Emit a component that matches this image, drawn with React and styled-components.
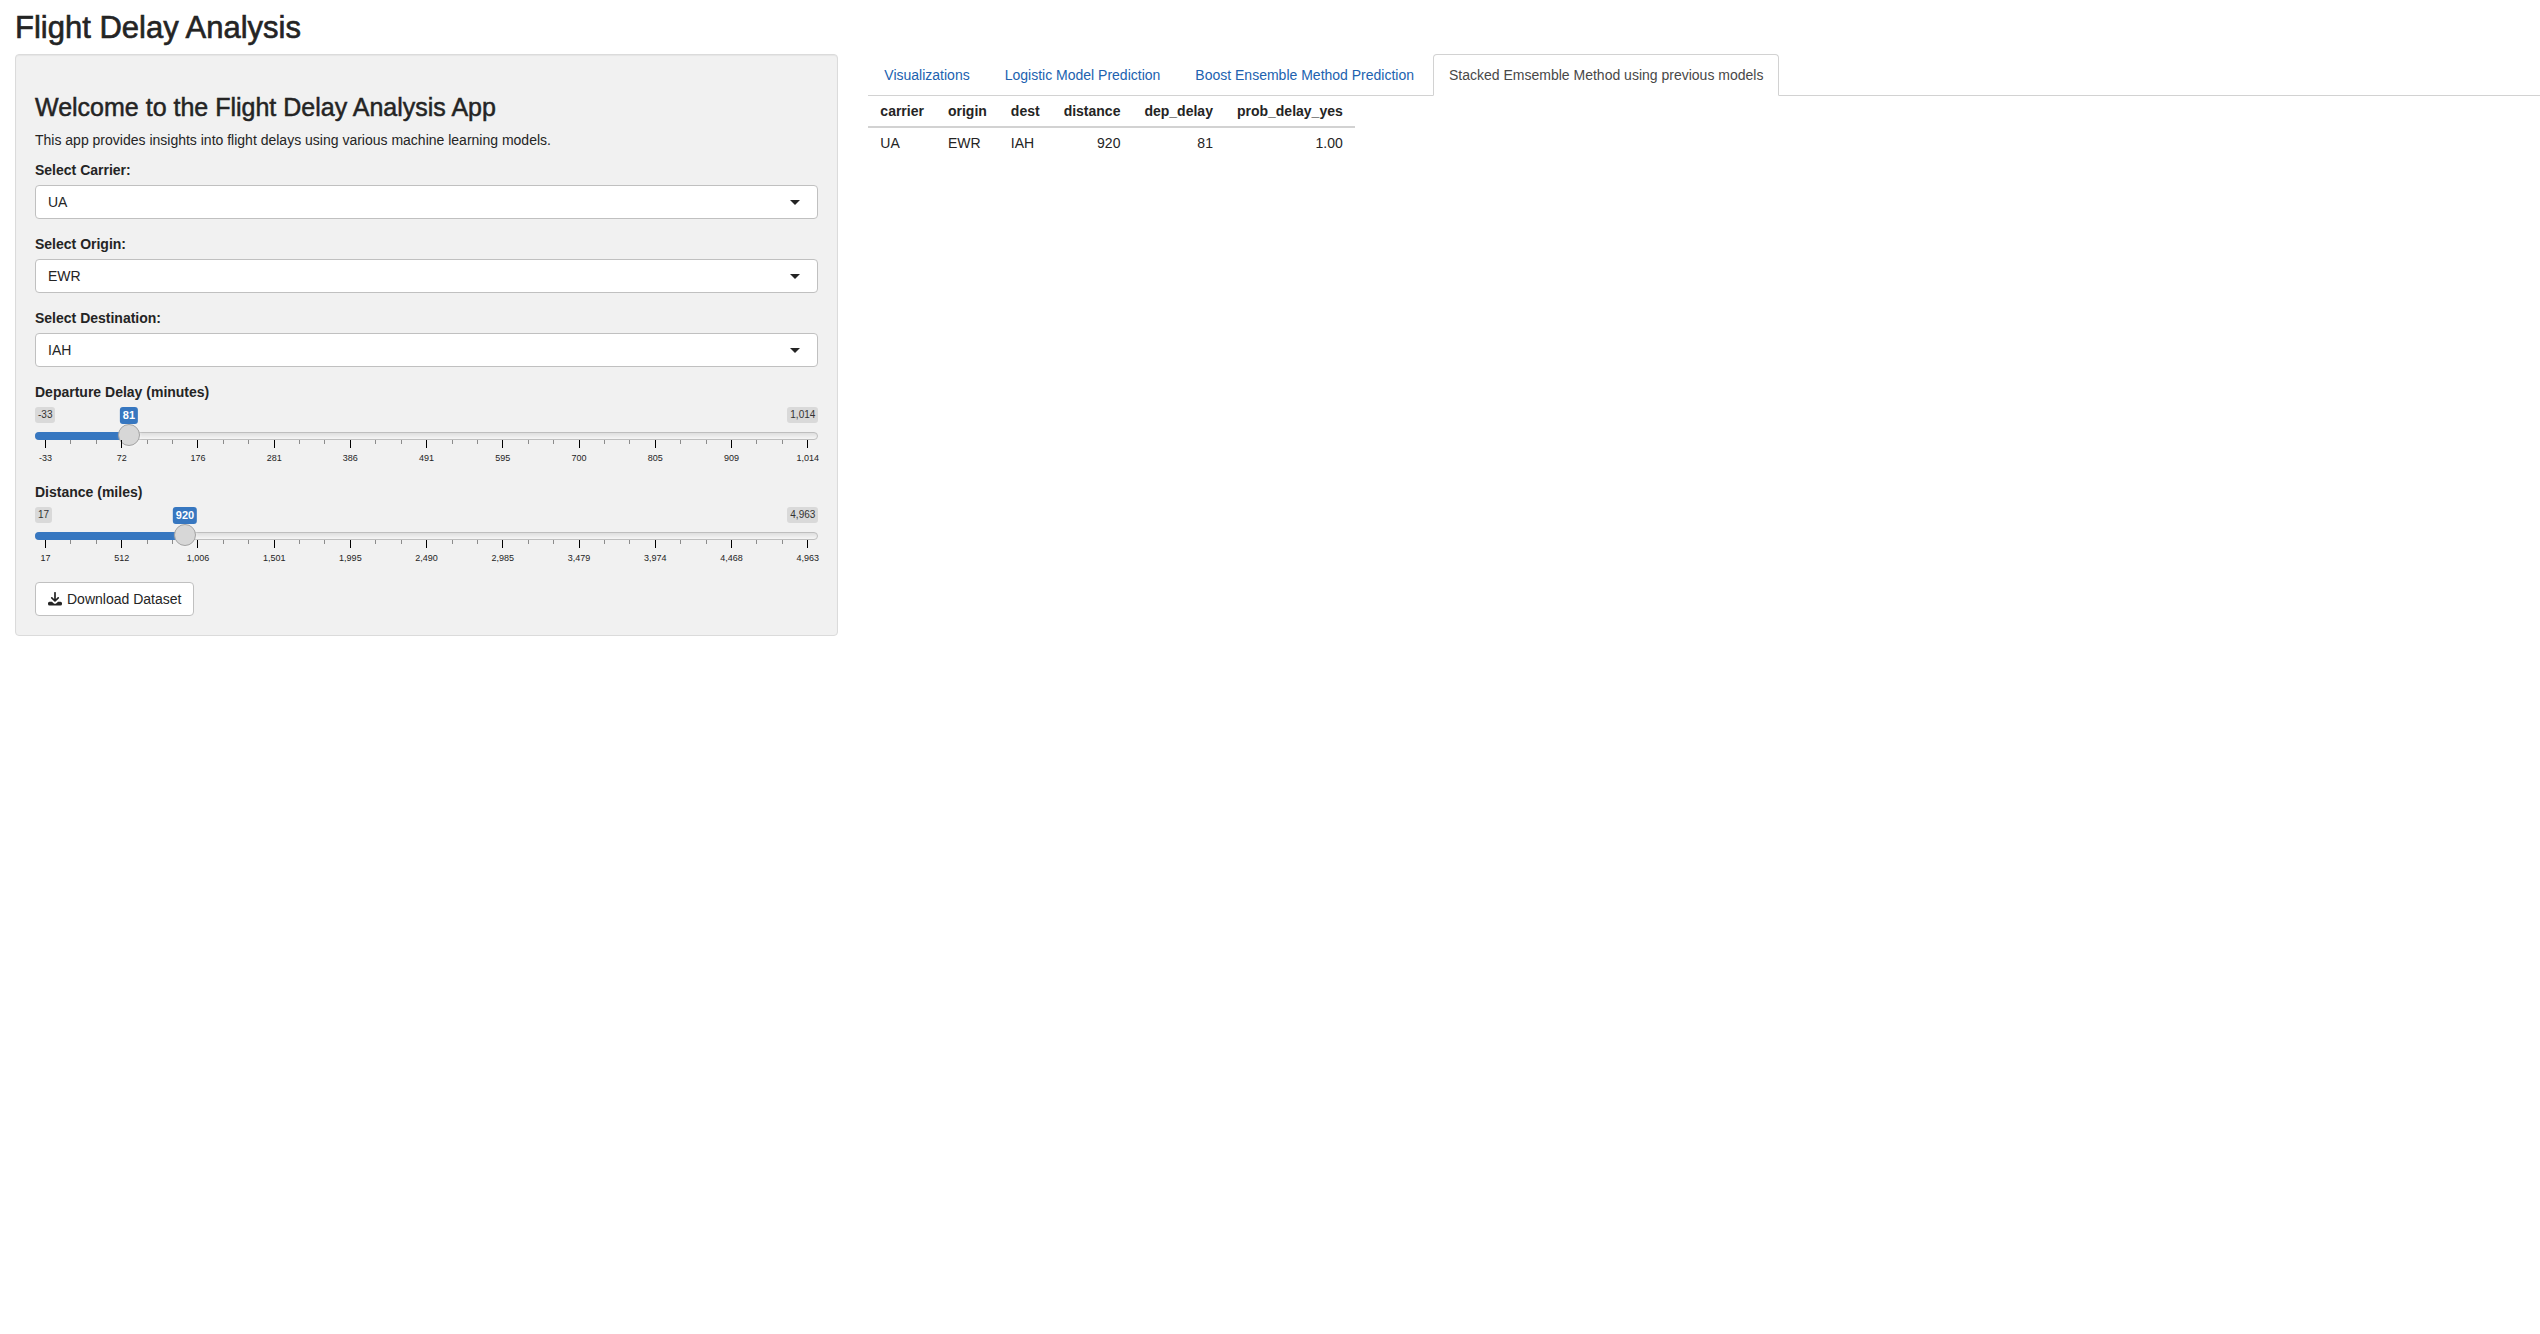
import React, { useId, useState } from "react";
import styled, { createGlobalStyle } from "styled-components";

const GlobalStyle = createGlobalStyle`
  *, *::before, *::after { box-sizing: border-box; }
  body {
    margin: 0;
    background: #fff;
    color: #242424;
    font-family: "Helvetica Neue", Helvetica, "Liberation Sans", Arial, sans-serif;
    font-size: 14px;
    line-height: 20px;
  }
`;

const Page = styled.div`
  padding: 11px 0 0 15px;
`;

const PageTitle = styled.h1`
  margin: 0 0 10px;
  font-size: 31px;
  line-height: 33px;
  font-weight: 400;
  -webkit-text-stroke: 0.02em currentColor;
`;

const Columns = styled.div`
  display: grid;
  grid-template-columns: minmax(0, 33fr) minmax(0, 67fr);
  column-gap: 30px;
  align-items: start;
`;

const Sidebar = styled.form`
  padding: 19px;
  background: #f1f1f1;
  border: 1px solid #dbdbdb;
  border-radius: 4px;
  box-shadow: inset 0 1px 1px rgba(0, 0, 0, 0.05);
`;

const Welcome = styled.h2`
  margin: 20px 0 10px;
  font-size: 25px;
  line-height: 26px;
  font-weight: 400;
  -webkit-text-stroke: 0.02em currentColor;
`;

const Intro = styled.p`
  margin: 0 0 10px;
`;

const Field = styled.div`
  margin-bottom: 15px;
`;

const Label = styled.label`
  display: block;
  margin-bottom: 5px;
  font-weight: 700;
`;

const SelectBox = styled.div`
  display: grid;
  align-items: center;
`;

const Select = styled.select`
  grid-area: 1 / 1;
  width: 100%;
  height: 34px;
  padding: 0 12px;
  appearance: none;
  background: #fff;
  border: 1px solid #c0c0c0;
  border-radius: 4px;
  color: inherit;
  font: inherit;
`;

const Caret = styled.span`
  grid-area: 1 / 1;
  justify-self: end;
  margin-right: 18px;
  border: 5px solid transparent;
  border-top-color: #242424;
  border-bottom: 0;
  pointer-events: none;
`;

const SliderBox = styled.div`
  position: relative;
  height: 60px;
`;

const Bounds = styled.div`
  display: flex;
  justify-content: space-between;
  height: 17px;
  align-items: flex-start;
`;

const Bound = styled.span`
  padding: 0 3px;
  background: #d9d9d9;
  border-radius: 3px;
  color: #333;
  font-size: 10px;
  line-height: 16px;
`;

const Bubble = styled.output`
  position: absolute;
  top: 0;
  transform: translateX(-50%);
  padding: 0 3px;
  background: #3777c0;
  border-radius: 3px;
  color: #fff;
  font-size: 11px;
  font-weight: 700;
  line-height: 17px;
`;

const Track = styled.div`
  display: grid;
  align-items: center;
  height: 22px;
`;

const Rail = styled.div`
  grid-area: 1 / 1;
  height: 8px;
  margin-top: 2px;
  background: linear-gradient(#dedede, #f6f6f6);
  border: 1px solid #bebebe;
  border-radius: 8px;
`;

const Fill = styled.div`
  grid-area: 1 / 1;
  height: 8px;
  margin-top: 2px;
  background: #3777c0;
  border-radius: 8px 0 0 8px;
`;

const Range = styled.input`
  grid-area: 1 / 1;
  width: 100%;
  height: 22px;
  margin: 0;
  appearance: none;
  background: transparent;
  &::-webkit-slider-runnable-track {
    height: 22px;
    background: transparent;
  }
  &::-webkit-slider-thumb {
    appearance: none;
    width: 22px;
    height: 22px;
    background: #d7d7d7;
    border: 1px solid #a3a3a3;
    border-radius: 50%;
    box-shadow: 1px 1px 3px rgba(255, 255, 255, 0.3);
  }
`;

const Scale = styled.div`
  display: flex;
  justify-content: space-between;
  margin-top: -6px;
  padding: 0 10px;
`;

const Tick = styled.span`
  display: flex;
  flex-direction: column;
  align-items: center;
  width: 1px;
  &::before {
    content: "";
    flex: none;
    width: 1px;
    height: ${(p) => (p.$major ? 8 : 4)}px;
    background: ${(p) => (p.$major ? "#000" : "#8c8c8c")};
  }
`;

const TickLabel = styled.span`
  margin-top: 5px;
  font-size: 9px;
  line-height: 10px;
  white-space: nowrap;
`;

const DownloadButton = styled.button`
  display: flex;
  align-items: center;
  gap: 5px;
  height: 34px;
  padding: 0 12px;
  background: #fff;
  border: 1px solid #c0c0c0;
  border-radius: 4px;
  color: inherit;
  font: inherit;
`;

const TabBar = styled.nav`
  display: flex;
  gap: 3px;
  border-bottom: 1px solid #d2d2d2;
`;

const Tab = styled.a`
  height: 42px;
  margin-bottom: -1px;
  padding: 10px 15px;
  border: 1px solid ${(p) => (p.$active ? "#d2d2d2" : "transparent")};
  border-bottom-color: ${(p) => (p.$active ? "#fff" : "transparent")};
  border-radius: 4px 4px 0 0;
  color: ${(p) => (p.$active ? "#484848" : "#2162af")};
  text-decoration: none;
`;

const Results = styled.table`
  border-collapse: separate;
  border-spacing: 0;
`;

const HeadCell = styled.th`
  padding: 5px 12px;
  border-bottom: 2px solid #d2d2d2;
  text-align: ${(p) => (p.$numeric ? "right" : "left")};
`;

const Cell = styled.td`
  padding: 5px 12px;
  text-align: ${(p) => (p.$numeric ? "right" : "left")};
`;

const columns = [
  { name: "carrier", value: "UA" },
  { name: "origin", value: "EWR" },
  { name: "dest", value: "IAH" },
  { name: "distance", value: "920", numeric: true },
  { name: "dep_delay", value: "81", numeric: true },
  { name: "prob_delay_yes", value: "1.00", numeric: true },
];

const tabs = [
  "Visualizations",
  "Logistic Model Prediction",
  "Boost Ensemble Method Prediction",
  "Stacked Emsemble Method using previous models",
];

const format = (n) => n.toLocaleString("en-US");

function SelectField({ label, options }) {
  const id = useId();
  return (
    <Field>
      <Label htmlFor={id}>{label}</Label>
      <SelectBox>
        <Select id={id}>
          {options.map((o) => (
            <option key={o}>{o}</option>
          ))}
        </Select>
        <Caret />
      </SelectBox>
    </Field>
  );
}

function SliderField({ label, min, max, initial }) {
  const id = useId();
  const [value, setValue] = useState(initial);
  const ratio = (value - min) / (max - min);
  const center = `calc(11px + (100% - 22px) * ${ratio})`;
  return (
    <Field>
      <Label htmlFor={id}>{label}</Label>
      <SliderBox>
        <Bounds>
          <Bound>{format(min)}</Bound>
          <Bound>{format(max)}</Bound>
        </Bounds>
        <Bubble htmlFor={id} style={{ left: center }}>{format(value)}</Bubble>
        <Track>
          <Rail />
          <Fill style={{ width: center }} />
          <Range
            id={id}
            type="range"
            min={min}
            max={max}
            value={value}
            onChange={(e) => setValue(Number(e.target.value))}
          />
        </Track>
        <Scale>
          {Array.from({ length: 31 }, (_, i) => {
            const major = i % 3 === 0;
            return (
              <Tick key={i} $major={major}>
                {major && <TickLabel>{format(Math.round(min + ((max - min) * i) / 30))}</TickLabel>}
              </Tick>
            );
          })}
        </Scale>
      </SliderBox>
    </Field>
  );
}

function DownloadIcon() {
  return (
    <svg width="14" height="14" viewBox="0 0 14 14" aria-hidden="true">
      <path d="M7 .8v8M3.8 5.800 7 9l3.2-3.200" fill="none" stroke="currentColor" strokeWidth="1.7" strokeLinecap="round" strokeLinejoin="round" />
      <path d="M1.500 9.800H4L5.600 11.200q1.400 1 2.800 0L10 9.800h2.500q1.500 0 1.500 1.500v.7q0 1.500-1.500 1.500h-11Q0 13.500 0 12v-.7Q0 9.800 1.500 9.800z" fill="currentColor" />
    </svg>
  );
}

export default function App() {
  return (
    <Page>
      <GlobalStyle />
      <PageTitle>Flight Delay Analysis</PageTitle>
      <Columns>
        <Sidebar onSubmit={(e) => e.preventDefault()}>
          <Welcome>Welcome to the Flight Delay Analysis App</Welcome>
          <Intro>This app provides insights into flight delays using various machine learning models.</Intro>
          <SelectField label="Select Carrier:" options={["UA"]} />
          <SelectField label="Select Origin:" options={["EWR"]} />
          <SelectField label="Select Destination:" options={["IAH"]} />
          <SliderField label="Departure Delay (minutes)" min={-33} max={1014} initial={81} />
          <SliderField label="Distance (miles)" min={17} max={4963} initial={920} />
          <DownloadButton type="button">
            <DownloadIcon />
            Download Dataset
          </DownloadButton>
        </Sidebar>
        <main>
          <TabBar>
            {tabs.map((t, i) => (
              <Tab key={t} href="#" $active={i === 3}>{t}</Tab>
            ))}
          </TabBar>
          <Results>
            <thead>
              <tr>
                {columns.map((c) => (
                  <HeadCell key={c.name} $numeric={c.numeric}>{c.name}</HeadCell>
                ))}
              </tr>
            </thead>
            <tbody>
              <tr>
                {columns.map((c) => (
                  <Cell key={c.name} $numeric={c.numeric}>{c.value}</Cell>
                ))}
              </tr>
            </tbody>
          </Results>
        </main>
      </Columns>
    </Page>
  );
}
